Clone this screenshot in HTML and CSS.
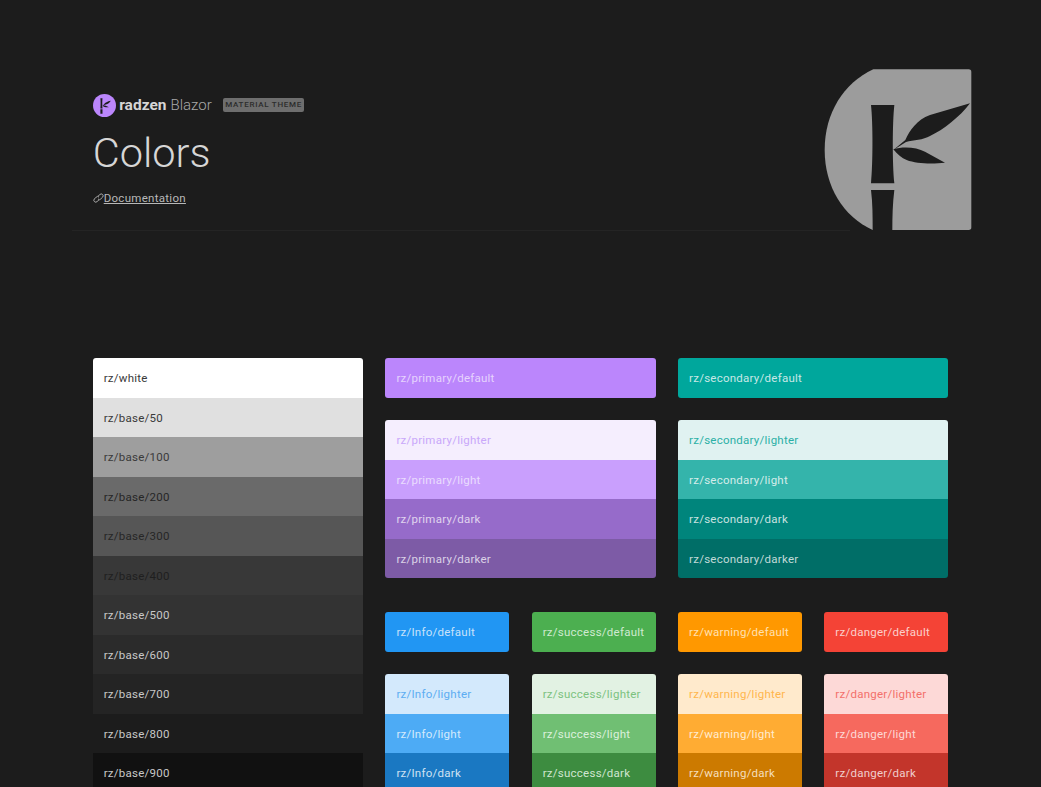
FILE: index.html
```html
<!DOCTYPE html>
<html lang="en">
<head>
<meta charset="utf-8">
<title>Colors</title>
<link rel="stylesheet" href="styles.css">
</head>
<body>
<header class="hero">
  <div class="brand">
    <svg class="mark" viewBox="0 0 24 24" aria-hidden="true">
      <circle cx="12" cy="12" r="12" fill="#bb86fc"/>
      <path d="M7.700 4.500h2.200c-.3 3-.3 7 0 10.500H7.700c.3-3.500 .3-7.500 0-10.500zM7.700 16h2.200v4.500H7.700z" fill="#1c1c1c"/>
      <path d="M9.900 12.200 11.600 10.800c1-2 3.500-3 7-3.800-1.500 2.500-3.500 3.800-6.200 4.300zM10 12.300c2-.7 3.500-.2 6.500 1.500-2.500 .3-5 0-6.500-1.500z" fill="#1c1c1c"/>
    </svg>
    <span class="brand-name">radzen</span>
    <span class="brand-sub">Blazor</span>
    <span class="badge">MATERIAL THEME</span>
  </div>
  <h1 class="title">Colors</h1>
  <a class="doc-link" href="#">
    <svg class="link-icon" viewBox="0 0 12 12" aria-hidden="true">
      <path d="M5.500 3.500 7.500 1.700a2 2 0 0 1 3 2.800L8.500 6.500a2 2 0 0 1-3 0M6.500 4.500a2 2 0 0 0-3 0L1.500 6.500a2 2 0 0 0 3 2.800l2-1.800" fill="none" stroke="currentColor" stroke-width="1"/>
    </svg><span class="doc-text">Documentation</span>
  </a>
  <svg class="hero-logo" viewBox="0 0 540 540" aria-hidden="true">
    <path d="M190 28H476Q484 28 484 36V502Q484 510 476 510H188C100 470 44 380 44 270C44 160 100 70 190 28Z" fill="#9c9c9c"/>
    <path d="M183 135H253C247 190 247 310 253 370H183C189 310 189 190 183 135Z" fill="#1c1c1c"/>
    <path d="M183 390H253C248 430 247 470 247 510H188C188 470 188 430 183 390Z" fill="#1c1c1c"/>
    <path d="M286 240C300 210 320 180 360 165L480 130C450 170 400 210 360 228C340 240 310 240 288 246L250 270Z" fill="#1c1c1c"/>
    <path d="M250 268C280 258 320 262 345 275L405 308C370 312 320 312 290 300C275 295 262 282 250 268Z" fill="#1c1c1c"/>
  </svg>
</header>

<main class="palette">
  <section class="stack">
    <div class="sw c-white t-dark">rz/white</div>
    <div class="sw c-50 t-dark">rz/base/50</div>
    <div class="sw c-100 t-dark">rz/base/100</div>
    <div class="sw c-200 t-darker">rz/base/200</div>
    <div class="sw c-300 t-darker">rz/base/300</div>
    <div class="sw c-400 t-darkest">rz/base/400</div>
    <div class="sw c-500 t-light">rz/base/500</div>
    <div class="sw c-600 t-light">rz/base/600</div>
    <div class="sw c-700 t-light">rz/base/700</div>
    <div class="sw c-800 t-light">rz/base/800</div>
    <div class="sw c-900 t-light">rz/base/900</div>
  </section>

  <div class="right">
    <div class="wide-row">
      <div class="group">
        <div class="stack"><div class="sw p-def">rz/primary/default</div></div>
        <div class="stack">
          <div class="sw p-ler">rz/primary/lighter</div>
          <div class="sw p-lt">rz/primary/light</div>
          <div class="sw p-dk">rz/primary/dark</div>
          <div class="sw p-der">rz/primary/darker</div>
        </div>
      </div>
      <div class="group">
        <div class="stack"><div class="sw s-def">rz/secondary/default</div></div>
        <div class="stack">
          <div class="sw s-ler">rz/secondary/lighter</div>
          <div class="sw s-lt">rz/secondary/light</div>
          <div class="sw s-dk">rz/secondary/dark</div>
          <div class="sw s-der">rz/secondary/darker</div>
        </div>
      </div>
    </div>
    <div class="narrow-row">
      <div class="group">
        <div class="stack"><div class="sw i-def">rz/Info/default</div></div>
        <div class="stack">
          <div class="sw i-ler">rz/Info/lighter</div>
          <div class="sw i-lt">rz/Info/light</div>
          <div class="sw i-dk">rz/Info/dark</div>
        </div>
      </div>
      <div class="group">
        <div class="stack"><div class="sw g-def">rz/success/default</div></div>
        <div class="stack">
          <div class="sw g-ler">rz/success/lighter</div>
          <div class="sw g-lt">rz/success/light</div>
          <div class="sw g-dk">rz/success/dark</div>
        </div>
      </div>
      <div class="group">
        <div class="stack"><div class="sw w-def">rz/warning/default</div></div>
        <div class="stack">
          <div class="sw w-ler">rz/warning/lighter</div>
          <div class="sw w-lt">rz/warning/light</div>
          <div class="sw w-dk">rz/warning/dark</div>
        </div>
      </div>
      <div class="group">
        <div class="stack"><div class="sw d-def">rz/danger/default</div></div>
        <div class="stack">
          <div class="sw d-ler">rz/danger/lighter</div>
          <div class="sw d-lt">rz/danger/light</div>
          <div class="sw d-dk">rz/danger/dark</div>
        </div>
      </div>
    </div>
  </div>
</main>
</body>
</html>
```

FILE: styles.css
```css
* { box-sizing: border-box; }
html, body { margin: 0; height: 787px; overflow: hidden; }
body { background: #1c1c1c; font-family: Roboto, "Liberation Sans", sans-serif; color: #e0e0e0; }

.hero { position: relative; height: 231px; margin-left: 72px; width: 778px; padding: 93px 0 0 20.700px; border-bottom: 1px solid #242424; }
.brand { display: flex; align-items: center; height: 24px; }
.mark { width: 23px; height: 23px; margin-right: 3.500px; }
.brand-name { font-size: 15.500px; font-weight: 700; color: #d6d6d6; margin-right: 4px; }
.brand-sub { font-size: 15px; font-weight: 300; color: #a8a8a8; margin-right: 11px; }
.badge { background: #6e6e6e; color: #2c2c2c; font-size: 8px; font-weight: 500; letter-spacing: .09em; height: 14px; line-height: 14px; padding: 0 2.500px; border-radius: 2px; white-space: nowrap; }
.title { margin: 11px 0 0; font-size: 41.500px; line-height: 50px; font-weight: 300; color: #d6d6d6; }
.doc-link { display: flex; align-items: center; margin-top: 12px; font-size: 11.500px; line-height: 16px; letter-spacing: .025em; color: #b8b8b8; text-decoration: none; }
.link-icon { width: 11px; height: 11px; }
.doc-text { text-decoration: underline; }
.hero-logo { position: absolute; left: 738px; top: 60px; width: 180px; height: 180px; }

.palette { display: flex; gap: 22.400px; margin: 127.300px 0 0 92.700px; align-items: flex-start; }
.palette > .stack { width: 270.300px; }
.right { width: 563px; display: flex; flex-direction: column; gap: 34px; }
.wide-row { display: grid; grid-template-columns: 270.300px 270.300px; gap: 22.400px; }
.narrow-row { display: grid; grid-template-columns: 124px 124px 124px 124px; justify-content: space-between; }
.group { display: flex; flex-direction: column; gap: 22.600px; }
.stack { border-radius: 3px; overflow: hidden; }
.sw { height: 39.500px; line-height: 40px; padding-left: 11px; font-size: 11.500px; letter-spacing: .25px; white-space: nowrap; color: #e6e6e6; }
.t-dark { color: #3a3a3a; }
.t-darker { color: #262626; }
.t-darkest { color: #1f1f1f; }
.t-light { color: #c8c8c8; }

.c-white { background: #fff; }
.c-50 { background: #e0e0e0; }
.c-100 { background: #9e9e9e; }
.c-200 { background: #6a6a6a; }
.c-300 { background: #565656; }
.c-400 { background: #383838; }
.c-500 { background: #333; }
.c-600 { background: #2b2b2b; }
.c-700 { background: #242424; }
.c-800 { background: #1c1c1c; }
.c-900 { background: #111; }

.p-def { background: #bb86fc; color: #e6d3fd; }
.p-ler { background: #f5eefe; color: #c9a8fa; }
.p-lt { background: #c99ffd; color: #eadcfe; }
.p-dk { background: #966bca; color: #e0d4ef; }
.p-der { background: #7d5ba6; color: #dbd2e6; }

.s-def { background: #00a79c; color: #c8e8e6; }
.s-ler { background: #e0f2f1; color: #2bb0a6; }
.s-lt { background: #34b4ab; color: #d4ecea; }
.s-dk { background: #00857c; color: #c8e2e0; }
.s-der { background: #006e67; color: #c0dad8; }

.i-def { background: #2196f3; color: #c8e2fa; }
.i-ler { background: #d3e9fc; color: #5cadf2; }
.i-lt { background: #4dabf5; color: #d4eafc; }
.i-dk { background: #1a78c2; color: #cfe2f2; }

.g-def { background: #4caf50; color: #cfead0; }
.g-ler { background: #e2f2e3; color: #7cc27f; }
.g-lt { background: #70bf73; color: #dcf0dd; }
.g-dk { background: #3d8c40; color: #d0e6d1; }

.w-def { background: #ff9800; color: #ffe0b0; }
.w-ler { background: #ffeacc; color: #ffb64d; }
.w-lt { background: #ffac33; color: #ffebcf; }
.w-dk { background: #cc7a00; color: #f5dfbd; }

.d-def { background: #f44336; color: #fbcfcb; }
.d-ler { background: #fdd9d7; color: #f3706a; }
.d-lt { background: #f6695e; color: #fcd9d6; }
.d-dk { background: #c3352b; color: #f0cecb; }
```
